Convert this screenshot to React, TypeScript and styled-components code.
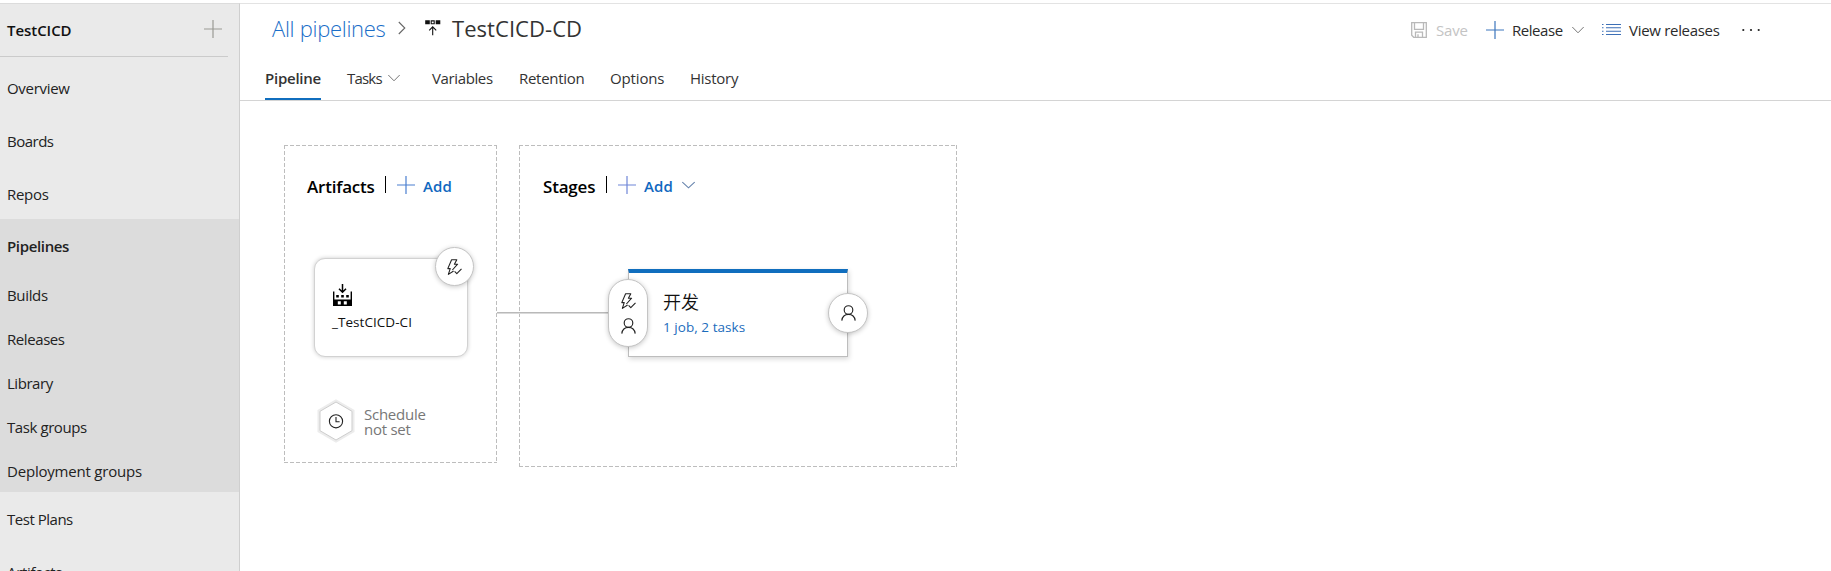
import React from 'react';
import styled, { createGlobalStyle } from 'styled-components';

const GlobalStyle = createGlobalStyle`
  *, *::before, *::after { box-sizing: border-box; }
  html, body, #root { height: 100%; }
  body {
    margin: 0;
    overflow: hidden;
    background: #fff;
    color: #222;
    font: 15px/20px "Open Sans", "Noto Sans", "Noto Sans CJK SC", sans-serif;
  }
  svg { display: block; flex: none; }
`;

const Page = styled.div`
  display: flex;
  height: 571px;
  padding-top: 3px;
`;

/* Sidebar */
const Sidebar = styled.nav`
  width: 240px;
  flex: none;
  display: flex;
  flex-direction: column;
  overflow: hidden;
  background: #eaeaea;
  border-top: 1px solid #dcdcdc;
  border-right: 1px solid #cfcfcf;
`;

const ProjectHeader = styled.div`
  display: flex;
  flex: none;
  align-items: center;
  justify-content: space-between;
  width: 228px;
  height: 53px;
  padding: 0 6px 2px 7px;
  border-bottom: 1px solid #cbcbcb;
`;

const ProjectName = styled.span`
  font-weight: 600;
  color: #111;
  letter-spacing: -0.05px;
  padding-top: 2px;
`;

const HubList = styled.div<{ $top?: number }>`
  display: flex;
  flex: none;
  flex-direction: column;
  gap: 5px;
  padding-top: ${p => p.$top ?? 0}px;
`;

const HubItem = styled.a<{ $spacing: number }>`
  display: flex;
  flex: none;
  align-items: center;
  height: 48px;
  padding: 0 0 2px 7px;
  letter-spacing: ${p => p.$spacing}px;
`;

const HubSection = styled.div`
  display: flex;
  flex: none;
  flex-direction: column;
  height: 273px;
  background: #dcdcdc;
`;

const HubSectionTitle = styled(HubItem)`
  height: 59px;
  padding-bottom: 6px;
  font-weight: 600;
`;

const SubItem = styled(HubItem)`
  height: 38px;
  padding-bottom: 4px;
  & + & { margin-top: 6px; }
`;

/* Main column */
const Main = styled.main`
  flex: 1;
  display: flex;
  flex-direction: column;
  border-top: 1px solid #e3e3e3;
`;

const Header = styled.header`
  height: 97px;
  flex: none;
  display: flex;
  flex-direction: column;
  border-bottom: 1px solid #d4d4d4;
`;

const TitleRow = styled.div`
  display: flex;
  align-items: center;
  justify-content: space-between;
  height: 52px;
  padding: 0 71px 0 32px;
`;

const Breadcrumb = styled.div`
  display: flex;
  align-items: center;
  height: 30px;
  margin-top: -3px;
  font-size: 22px;
  line-height: 30px;
`;

const CrumbLink = styled.a`
  width: 126px;
  margin-top: -1px;
  font-weight: 300;
  color: #1b6ec8;
  letter-spacing: -0.3px;
`;

const CrumbIcon = styled.span<{ $width: number }>`
  width: ${p => p.$width}px;
`;

const CrumbTitle = styled.h1`
  margin: -1px 0 0;
  font-size: 22px;
  line-height: 30px;
  font-weight: 400;
  color: #333;
  letter-spacing: 0.05px;
`;

const Toolbar = styled.div`
  display: flex;
  align-items: center;
  color: #2b2b2b;
`;

const ToolButton = styled.span<{ $gap: number; $after: number; $disabled?: boolean }>`
  display: flex;
  align-items: center;
  gap: ${p => p.$gap}px;
  margin-right: ${p => p.$after}px;
  color: ${p => (p.$disabled ? '#c4c4c4' : 'inherit')};
`;

const ToolLabel = styled.span<{ $width: number; $spacing: number }>`
  width: ${p => p.$width}px;
  white-space: nowrap;
  letter-spacing: ${p => p.$spacing}px;
`;

const Tabs = styled.div`
  display: flex;
  height: 45px;
  padding-left: 25px;
`;

const Tab = styled.a<{ $width: number; $spacing: number; $active?: boolean }>`
  display: flex;
  align-items: center;
  gap: 6px;
  width: ${p => p.$width}px;
  height: 45px;
  margin-right: 26px;
  padding-top: 2px;
  white-space: nowrap;
  color: #333;
  font-weight: ${p => (p.$active ? 600 : 400)};
  letter-spacing: ${p => p.$spacing}px;
  border-bottom: 2px solid ${p => (p.$active ? '#106ebe' : 'transparent')};
`;

/* Canvas */
const Canvas = styled.section`
  display: flex;
  align-items: flex-start;
  padding: 44px 0 0 44px;
`;

const Panel = styled.div<{ $width: number; $height: number; $inset: number }>`
  width: ${p => p.$width}px;
  height: ${p => p.$height}px;
  padding: 31px 0 0 ${p => p.$inset}px;
  background:
    repeating-linear-gradient(90deg, #bdbdbd 0 4px, transparent 4px 6px) top / 100% 1px no-repeat,
    repeating-linear-gradient(90deg, #bdbdbd 0 4px, transparent 4px 6px) bottom / 100% 1px no-repeat,
    repeating-linear-gradient(#bdbdbd 0 4px, transparent 4px 6px) left / 1px 100% no-repeat,
    repeating-linear-gradient(#bdbdbd 0 4px, transparent 4px 6px) right / 1px 100% no-repeat;
`;

const PanelHeading = styled.div`
  display: flex;
  align-items: center;
  height: 20px;
`;

const PanelTitle = styled.h2<{ $width: number; $spacing: number }>`
  width: ${p => p.$width}px;
  margin: 1px 0 0;
  font-size: 17px;
  line-height: 20px;
  font-weight: 600;
  color: #000;
  letter-spacing: ${p => p.$spacing}px;
`;

const Divider = styled.span`
  width: 1px;
  height: 17px;
  margin: 0 11px 3px 0;
  background: #000;
`;

const AddButton = styled.span`
  display: flex;
  align-items: center;
  gap: 8px;
  color: #1068c0;
  font-weight: 600;
  letter-spacing: 0.1px;
  svg { margin-bottom: 3px; }
`;

const AddText = styled.span`
  width: 30px;
`;

const ArtifactCard = styled.div`
  position: relative;
  display: flex;
  flex-direction: column;
  width: 154px;
  height: 99px;
  margin: 62px 0 0 7px;
  padding: 25px 0 0 18px;
  background: #fff;
  border: 1px solid #d2d2d2;
  border-radius: 11px;
  box-shadow: 0 0 4px rgba(0, 0, 0, 0.2);
`;

const ArtifactName = styled.span`
  margin: 6px 0 0 -1px;
  font-size: 13.5px;
  line-height: 20px;
  color: #111;
  letter-spacing: 0.05px;
`;

const Badge = styled.span<{ $left: number; $top: number; $size?: number; $height?: number }>`
  position: absolute;
  left: ${p => p.$left}px;
  top: ${p => p.$top}px;
  display: flex;
  flex-direction: column;
  align-items: center;
  justify-content: center;
  gap: 9px;
  width: ${p => p.$size ?? 39}px;
  height: ${p => p.$height ?? p.$size ?? 39}px;
  background: #fff;
  border: 1px solid #c4c4c4;
  border-radius: 20px;
  box-shadow: 0 1px 5px rgba(0, 0, 0, 0.22);
`;

const Schedule = styled.div`
  display: flex;
  align-items: center;
  gap: 9px;
  margin: 42px 0 0 10px;
  color: #777;
`;

const ScheduleText = styled.span`
  padding-top: 2px;
  font-size: 15px;
  line-height: 15px;
  letter-spacing: -0.25px;
`;

const Connector = styled.div`
  position: relative;
  width: 22px;
  height: 2px;
  margin-top: 167px;
  &::after {
    content: '';
    position: absolute;
    left: 0;
    top: 0;
    width: 113px;
    height: 2px;
    background: linear-gradient(#b9b9b9 50%, #dadada 50%);
  }
`;

const StageCard = styled.div`
  position: relative;
  display: flex;
  flex-direction: column;
  width: 220px;
  height: 88px;
  margin: 73px 0 0 85px;
  padding: 17px 0 0 34px;
  background: #fff;
  border: 1px solid #bdbdbd;
  border-top: 4px solid #106ebe;
  box-shadow: 1px 2px 5px rgba(0, 0, 0, 0.16);
`;

const StageName = styled.span`
  font-family: "Noto Sans CJK SC", sans-serif;
  font-size: 18px;
  font-weight: 350;
  line-height: 22px;
  color: #111;
`;

const StageTasks = styled.a`
  margin-top: 5px;
  font-size: 13.5px;
  line-height: 20px;
  color: #1b6cbc;
  letter-spacing: 0.05px;
`;

/* Icons */
const Plus = ({ color }: { color: string }) => (
  <svg width="18" height="18" viewBox="0 0 18 18" fill="none" stroke={color} strokeWidth="1.2">
    <path d="M9 0v18M0 9h18" />
  </svg>
);

const ChevronDown = ({ color = '#777', width = 12 }: { color?: string; width?: number }) => (
  <svg width={width} height="8" viewBox="0 0 12 8" preserveAspectRatio="none" fill="none" stroke={color}>
    <path d="M.3 1 6 6.8 11.7 1" />
  </svg>
);

const ChevronRight = () => (
  <svg width="8" height="14" viewBox="0 0 8 14" fill="none" stroke="#666" strokeWidth="1.1">
    <path d="m.8 1 6 6-6 6" />
  </svg>
);

const ReleaseIcon = () => (
  <svg width="16" height="16" viewBox="0 0 16 16" fill="none" stroke="#111">
    <path d="M.2.3h4.6v4H.2zM10.7.3h4.6v4h-4.6z" fill="#111" stroke="none" />
    <path d="M6.2.9h3v2.8h-3z" strokeWidth="1.1" />
    <path d="M7.7 15.2V7M4.2 10.3l3.5-3.5 3.5 3.5" strokeWidth="1.1" />
  </svg>
);

const SaveIcon = () => (
  <svg width="16" height="16" viewBox="0 0 16 16" fill="none" stroke="#b9b9b9" strokeWidth="1.3">
    <path d="M.7.7h14.6v14.6H2.7l-2-2zM3.5.7v6.6h9V.7M4.5 15v-4.8h7V15M7 12.3V15" />
  </svg>
);

const ListIcon = () => (
  <svg width="19" height="13" viewBox="0 0 19 13" fill="none" stroke="#3c6fb6">
    <path d="M4 1.5h15M4 4.8h15M4 8.2h15M4 11.5h15" strokeWidth="1.1" />
    <path d="M0 1.5h1.5M0 4.8h1.5M0 8.2h1.5M0 11.5h1.5" strokeWidth="1.1" />
  </svg>
);

const MoreIcon = () => (
  <svg width="18" height="4" viewBox="0 0 18 4" fill="#222">
    <circle cx="1.3" cy="2" r="1.1" />
    <circle cx="9" cy="2" r="1.1" />
    <circle cx="16.7" cy="2" r="1.1" />
  </svg>
);

const TriggerIcon = () => (
  <svg width="15" height="16" viewBox="0 0 15 16" fill="none" stroke="#222" strokeWidth="1.1" strokeLinejoin="round">
    <path d="M6.6 12 1.4 15.4 3.2 9.6H.8L4.6.7h5.2L7.4 5.2h3.2L5.4 11" />
    <path d="m7.6 12.4 2.2 2.2 4.7-4.8" />
  </svg>
);

const PersonIcon = () => (
  <svg width="15" height="16" viewBox="0 0 15 16" fill="none" stroke="#222" strokeWidth="1.15">
    <circle cx="7.5" cy="5" r="4.3" />
    <path d="M.8 15.6C1.3 11.8 4 9.4 7.5 9.4s6.2 2.4 6.7 6.2" />
  </svg>
);

const BuildIcon = () => (
  <svg width="19" height="22" viewBox="0 0 19 22" fill="#000">
    <path d="M0 7.5h1.4v8h16.2v-8H19V22H0z" />
    <path d="M3.2 11h2.6v2.6H3.2zM8.2 11h2.6v2.6H8.2zM13.2 11h2.6v2.6h-2.6z" />
    <path d="M4.8 17.2h3v3.2h-3zM10.8 17.2h3v3.2h-3z" fill="#fff" />
    <path d="M9.5 0v8M6 4.8l3.5 3.5L13 4.8" fill="none" stroke="#000" strokeWidth="1.5" />
  </svg>
);

const ScheduleIcon = () => (
  <svg width="38" height="44" viewBox="0 0 38 44" fill="none">
    <path d="M19 2 36 11.8v20.4L19 42 2 32.2V11.8z" stroke="#ececec" strokeWidth="3" />
    <path d="M19 3 35 12.3v19.4L19 41 3 31.7V12.3z" fill="#fff" stroke="#cdcdcd" />
    <circle cx="19" cy="22.3" r="6.6" stroke="#222" strokeWidth="1.1" />
    <path d="M19 18v4.8h3.6" stroke="#222" strokeWidth="1.1" />
  </svg>
);

export default function App() {
  return (
    <>
      <GlobalStyle />
      <Page>
        <Sidebar>
          <ProjectHeader>
            <ProjectName>TestCICD</ProjectName>
            <Plus color="#9a9a94" />
          </ProjectHeader>
          <HubList $top={8}>
            <HubItem $spacing={-0.3}>Overview</HubItem>
            <HubItem $spacing={-0.5}>Boards</HubItem>
            <HubItem $spacing={-0.3}>Repos</HubItem>
          </HubList>
          <HubSection>
            <HubSectionTitle $spacing={-0.35}>Pipelines</HubSectionTitle>
            <SubItem $spacing={-0.35}>Builds</SubItem>
            <SubItem $spacing={-0.42}>Releases</SubItem>
            <SubItem $spacing={-0.46}>Library</SubItem>
            <SubItem $spacing={-0.42}>Task groups</SubItem>
            <SubItem $spacing={-0.2}>Deployment groups</SubItem>
          </HubSection>
          <HubList $top={4}>
            <HubItem $spacing={-0.48}>Test Plans</HubItem>
            <HubItem $spacing={-0.3}>Artifacts</HubItem>
          </HubList>
        </Sidebar>

        <Main>
          <Header>
            <TitleRow>
              <Breadcrumb>
                <CrumbLink>All pipelines</CrumbLink>
                <CrumbIcon $width={27}><ChevronRight /></CrumbIcon>
                <CrumbIcon $width={27}><ReleaseIcon /></CrumbIcon>
                <CrumbTitle>TestCICD-CD</CrumbTitle>
              </Breadcrumb>
              <Toolbar>
                <ToolButton $gap={9} $after={18} $disabled>
                  <SaveIcon />
                  <ToolLabel $width={32} $spacing={-0.2}>Save</ToolLabel>
                </ToolButton>
                <ToolButton $gap={8} $after={18}>
                  <Plus color="#3c76bd" />
                  <ToolLabel $width={52} $spacing={-0.45}>Release</ToolLabel>
                  <ChevronDown />
                </ToolButton>
                <ToolButton $gap={8} $after={22}>
                  <ListIcon />
                  <ToolLabel $width={91} $spacing={-0.3}>View releases</ToolLabel>
                </ToolButton>
                <MoreIcon />
              </Toolbar>
            </TitleRow>
            <Tabs>
              <Tab $width={56} $spacing={-0.25} $active>Pipeline</Tab>
              <Tab $width={59} $spacing={-0.8}>Tasks <ChevronDown /></Tab>
              <Tab $width={61} $spacing={-0.38}>Variables</Tab>
              <Tab $width={65} $spacing={-0.3}>Retention</Tab>
              <Tab $width={54} $spacing={-0.15}>Options</Tab>
              <Tab $width={48} $spacing={-0.25}>History</Tab>
            </Tabs>
          </Header>

          <Canvas>
            <Panel $width={213} $height={318} $inset={23}>
              <PanelHeading>
                <PanelTitle $width={78} $spacing={-0.2}>Artifacts</PanelTitle>
                <Divider />
                <AddButton><Plus color="#4a7fd0" /><AddText>Add</AddText></AddButton>
              </PanelHeading>
              <ArtifactCard>
                <BuildIcon />
                <ArtifactName>_TestCICD-CI</ArtifactName>
                <Badge $left={120} $top={-12}><TriggerIcon /></Badge>
              </ArtifactCard>
              <Schedule>
                <ScheduleIcon />
                <ScheduleText>Schedule<br />not set</ScheduleText>
              </Schedule>
            </Panel>
            <Connector />
            <Panel $width={438} $height={322} $inset={24}>
              <PanelHeading>
                <PanelTitle $width={63} $spacing={-0.2}>Stages</PanelTitle>
                <Divider />
                <AddButton><Plus color="#6f86d8" /><AddText>Add</AddText><ChevronDown color="#6683ad" width={13} /></AddButton>
              </PanelHeading>
              <StageCard>
                <StageName>开发</StageName>
                <StageTasks>1 job, 2 tasks</StageTasks>
                <Badge $left={-21} $top={6} $size={40} $height={68}><TriggerIcon /><PersonIcon /></Badge>
                <Badge $left={199} $top={20} $size={40}><PersonIcon /></Badge>
              </StageCard>
            </Panel>
          </Canvas>
        </Main>
      </Page>
    </>
  );
}
